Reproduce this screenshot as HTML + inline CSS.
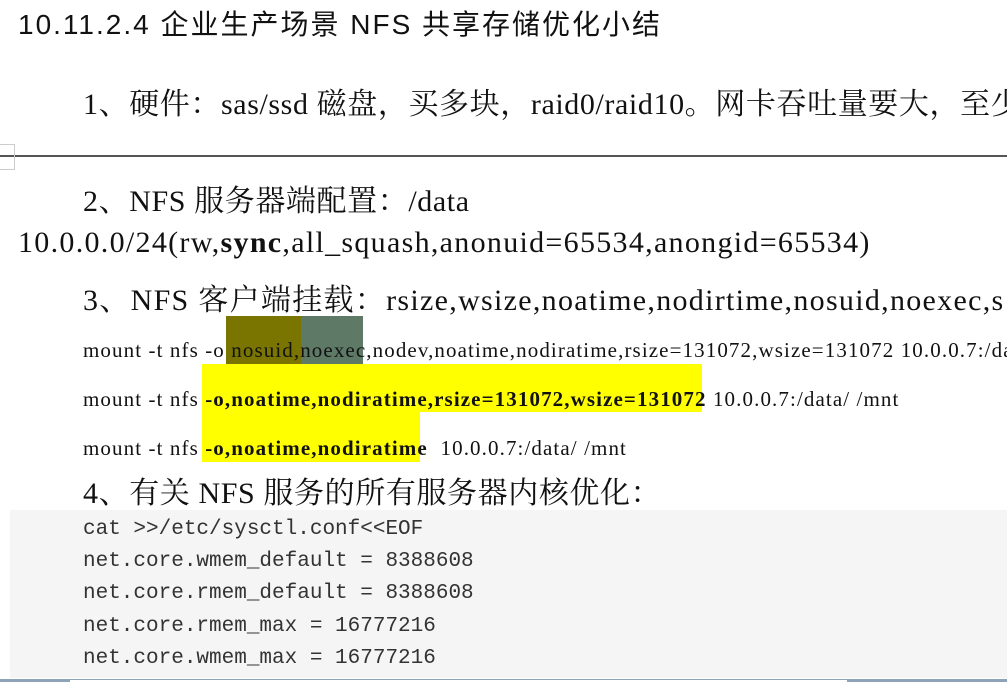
<!DOCTYPE html>
<html><head><meta charset="utf-8"><style>
body{margin:0;width:1007px;height:682px;overflow:hidden;background:#fff;position:relative;font-family:"Liberation Serif","Noto Serif CJK SC",serif;color:#111}
.a{position:absolute;white-space:nowrap}
.s{font-family:"Liberation Sans","Noto Sans CJK SC",sans-serif}
.t{font-size:30px;letter-spacing:0.6px}
.m{font-size:21px;letter-spacing:1.1px}
.code{position:absolute;left:10px;top:510px;width:997px;height:168px;background:#f5f5f5}
.c{position:absolute;left:83px;font-family:"Liberation Mono","Noto Serif CJK SC",monospace;font-size:21px;color:#333;white-space:nowrap}
</style></head><body>
<div class="a s" style="left:18px;top:3px;font-size:28px;letter-spacing:2px">10.11.2.4 企业生产场景 NFS 共享存储优化小结</div>
<div class="a t" style="left:83px;top:79px">1、硬件：sas/ssd 磁盘，买多块，raid0/raid10。网卡吞吐量要大，至少</div>
<div style="position:absolute;left:0;top:155px;width:1007px;height:2px;background:#555"></div>
<div style="position:absolute;left:0;top:144px;width:14px;height:24px;border:1px solid #ccc;border-left:none"></div>
<div class="a t" style="left:83px;top:176px">2、NFS 服务器端配置：/data</div>
<div class="a t" style="left:18px;top:226px;letter-spacing:1.3px">10.0.0.0/24(rw,<b>sync</b>,all_squash,anonuid=65534,anongid=65534)</div>
<div class="a t" style="left:83px;top:275px;letter-spacing:1.3px">3、NFS 客户端挂载：rsize,wsize,noatime,nodirtime,nosuid,noexec,s</div>
<div style="position:absolute;left:226px;top:316px;width:75px;height:48px;background:#7a7400"></div>
<div style="position:absolute;left:301px;top:316px;width:62px;height:48px;background:#5e7a66"></div>
<div style="position:absolute;left:202px;top:364px;width:500px;height:48px;background:#ffff00"></div>
<div style="position:absolute;left:202px;top:412px;width:218px;height:50px;background:#ffff00"></div>
<div class="a m" style="left:83px;top:338px">mount -t nfs -o nosuid,noexec,nodev,noatime,nodiratime,rsize=131072,wsize=131072 10.0.0.7:/da</div>
<div class="a m" style="left:83px;top:387px">mount -t nfs <b>-o,noatime,nodiratime,rsize=131072,wsize=131072</b> 10.0.0.7:/data/ /mnt</div>
<div class="a m" style="left:83px;top:436px">mount -t nfs <b>-o,noatime,nodiratime</b> &nbsp;10.0.0.7:/data/ /mnt</div>
<div class="a t" style="left:83px;top:468px">4、有关 NFS 服务的所有服务器内核优化：</div>
<div class="code"></div>
<div class="c" style="top:518px">cat &gt;&gt;/etc/sysctl.conf&lt;&lt;EOF</div>
<div class="c" style="top:550px">net.core.wmem_default = 8388608</div>
<div class="c" style="top:582px">net.core.rmem_default = 8388608</div>
<div class="c" style="top:615px">net.core.rmem_max = 16777216</div>
<div class="c" style="top:647px">net.core.wmem_max = 16777216</div>
<div style="position:absolute;left:0;top:679px;width:1007px;height:3px;background:#8fa3b8"></div>
<div style="position:absolute;left:70px;top:680px;width:777px;height:2px;background:#fff"></div>
</body></html>
